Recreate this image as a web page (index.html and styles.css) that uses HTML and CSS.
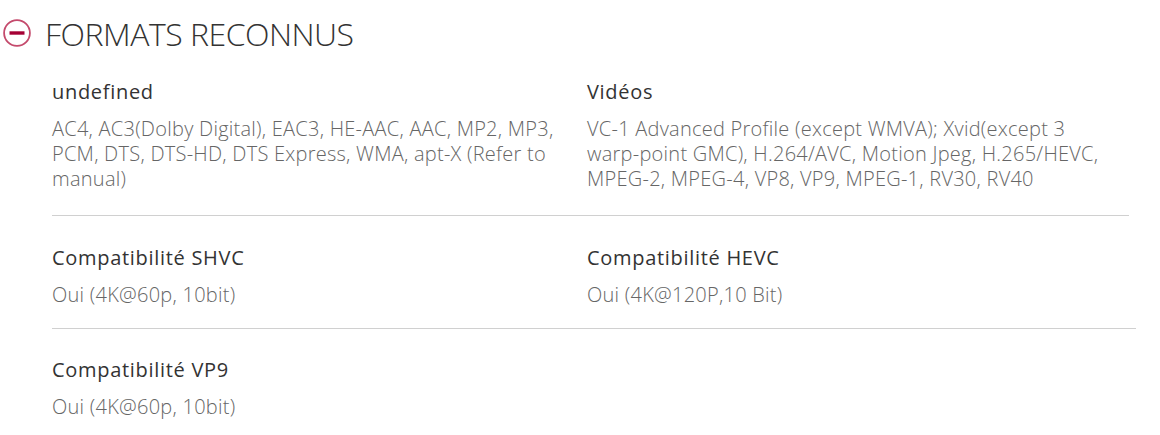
FILE: index.html
```html
<!DOCTYPE html>
<html lang="fr">
<head>
<meta charset="utf-8">
<title>Formats reconnus</title>
<link rel="stylesheet" href="styles.css">
</head>
<body>
<section class="spec">
  <h2 class="spec-title">
    <svg class="toggle" width="28" height="28" viewBox="0 0 28 28" aria-hidden="true">
      <circle cx="14" cy="14" r="12.9" fill="none" stroke="#c44a6c" stroke-width="1.8"/>
      <rect x="6.5" y="12.3" width="15" height="3.4" fill="#a50034"/>
    </svg>
    <span>FORMATS RECONNUS</span>
  </h2>
  <div class="spec-list">
    <div class="spec-row row-a">
      <div class="spec-item">
        <div class="label">undefined</div>
        <div class="value">AC4, AC3(Dolby Digital), EAC3, HE-AAC, AAC, MP2, MP3, PCM, DTS, DTS-HD, DTS Express, WMA, apt-X (Refer to manual)</div>
      </div>
      <div class="spec-item">
        <div class="label">Vidéos</div>
        <div class="value">VC-1 Advanced Profile (except WMVA); Xvid(except 3 <span class="nobr">warp-point</span> GMC), H.264/AVC, Motion Jpeg, H.265/HEVC, <span class="nobr">MPEG-2,</span> <span class="nobr">MPEG-4,</span> VP8, VP9, <span class="nobr">MPEG-1,</span> RV30, RV40</div>
      </div>
    </div>
    <div class="spec-row row-b">
      <div class="spec-item">
        <div class="label">Compatibilité SHVC</div>
        <div class="value">Oui (4K@60p, 10bit)</div>
      </div>
      <div class="spec-item">
        <div class="label">Compatibilité HEVC</div>
        <div class="value">Oui (4K@120P,10 Bit)</div>
      </div>
    </div>
    <div class="spec-row row-c">
      <div class="spec-item">
        <div class="label">Compatibilité VP9</div>
        <div class="value">Oui (4K@60p, 10bit)</div>
      </div>
    </div>
  </div>
</section>
</body>
</html>
```

FILE: styles.css
```css
html, body {
  margin: 0;
  padding: 0;
  background: #ffffff;
}

body {
  font-family: "Open Sans", "Noto Sans", sans-serif;
  color: #333333;
}

.spec-title {
  display: flex;
  align-items: center;
  gap: 14px;
  height: 32px;
  margin: 17px 0 0 3px;
  font-size: 32px;
  font-weight: 300;
  color: #333333;
  letter-spacing: -0.5px;
}

.toggle {
  flex: none;
}

.spec-list {
  padding-left: 52px;
}

.spec-row {
  display: grid;
  grid-template-columns: 535px 1fr;
  padding: 30px 0 24px;
}

.row-a {
  width: 1077px;
  border-bottom: 1px solid #d0d0d0;
}

.row-b {
  width: 1084px;
  border-bottom: 1px solid #d0d0d0;
  padding-top: 29px;
  padding-bottom: 21px;
}

.row-c {
  padding-top: 28px;
}

.label {
  font-size: 20px;
  line-height: 26px;
  letter-spacing: 0.7px;
  color: #333333;
}

.value {
  margin-top: 11px;
  font-size: 20px;
  line-height: 25px;
  letter-spacing: 0.25px;
  color: #666666;
  font-weight: 300;
}

.nobr {
  white-space: nowrap;
}
```
